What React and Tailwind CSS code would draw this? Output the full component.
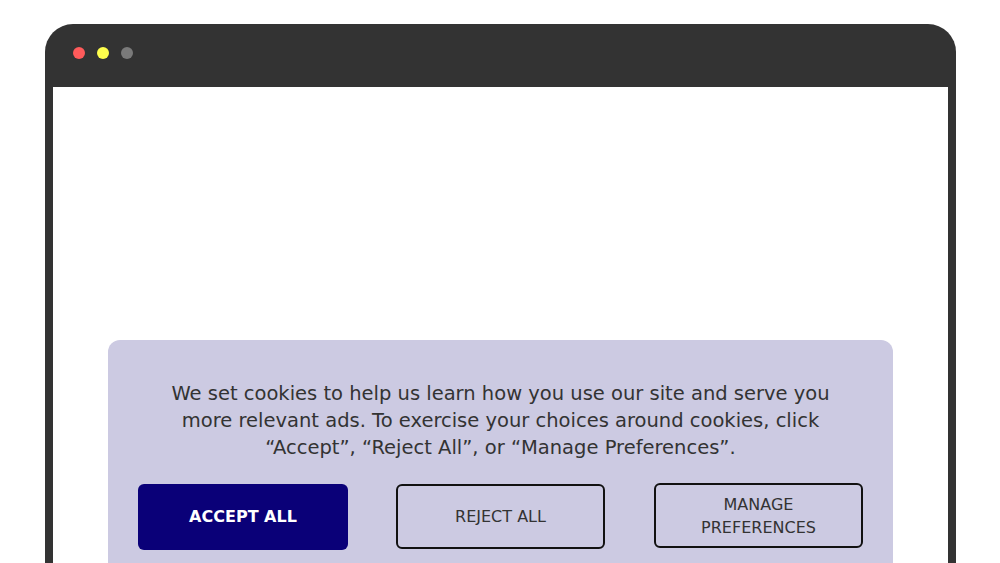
import React from "react";

export default function App() {
  return (
    <div className="w-[1000px] h-[563px] overflow-hidden bg-white pt-[24px] pl-[45px] pr-[44px]" style={{ fontFamily: '"DejaVu Sans", sans-serif' }}>
      <div className="h-[600px] rounded-t-[28px] bg-[#333333] flex flex-col">
        <div className="h-[63px] shrink-0 flex items-center gap-[12px] pl-[28px] pb-[5px]">
          <span className="w-[12px] h-[12px] rounded-full bg-[#ff5b5b]" />
          <span className="w-[12px] h-[12px] rounded-full bg-[#ffff4d]" />
          <span className="w-[12px] h-[12px] rounded-full bg-[#7a7a7a]" />
        </div>
        <div className="flex-1 mx-[8px] bg-white pt-[253px] px-[55px]">
          <div className="rounded-[12px] bg-[#cccae2] pt-[40px] px-[30px] pb-[40px]">
            <p className="mx-auto max-w-[680px] text-center text-[19.5px] leading-[27px] text-[#333333]">
              We set cookies to help us learn how you use our site and serve you more relevant ads. To exercise your choices around cookies, click “Accept”, “Reject All”, or “Manage Preferences”.
            </p>
            <div className="mt-[23px] flex gap-[48px]">
              <button className="w-[210px] h-[66px] rounded-[6px] bg-[#0a0078] text-white text-[16px] font-bold uppercase">
                Accept All
              </button>
              <button className="w-[209px] h-[65px] rounded-[6px] border-2 border-[#111111] text-[#333333] text-[16px] uppercase">
                Reject All
              </button>
              <button className="w-[209px] h-[65px] ml-[1px] -mt-[1px] rounded-[6px] border-2 border-[#111111] text-[#333333] text-[16px] leading-[23px] uppercase px-[20px]">
                Manage Preferences
              </button>
            </div>
          </div>
        </div>
      </div>
    </div>
  );
}
